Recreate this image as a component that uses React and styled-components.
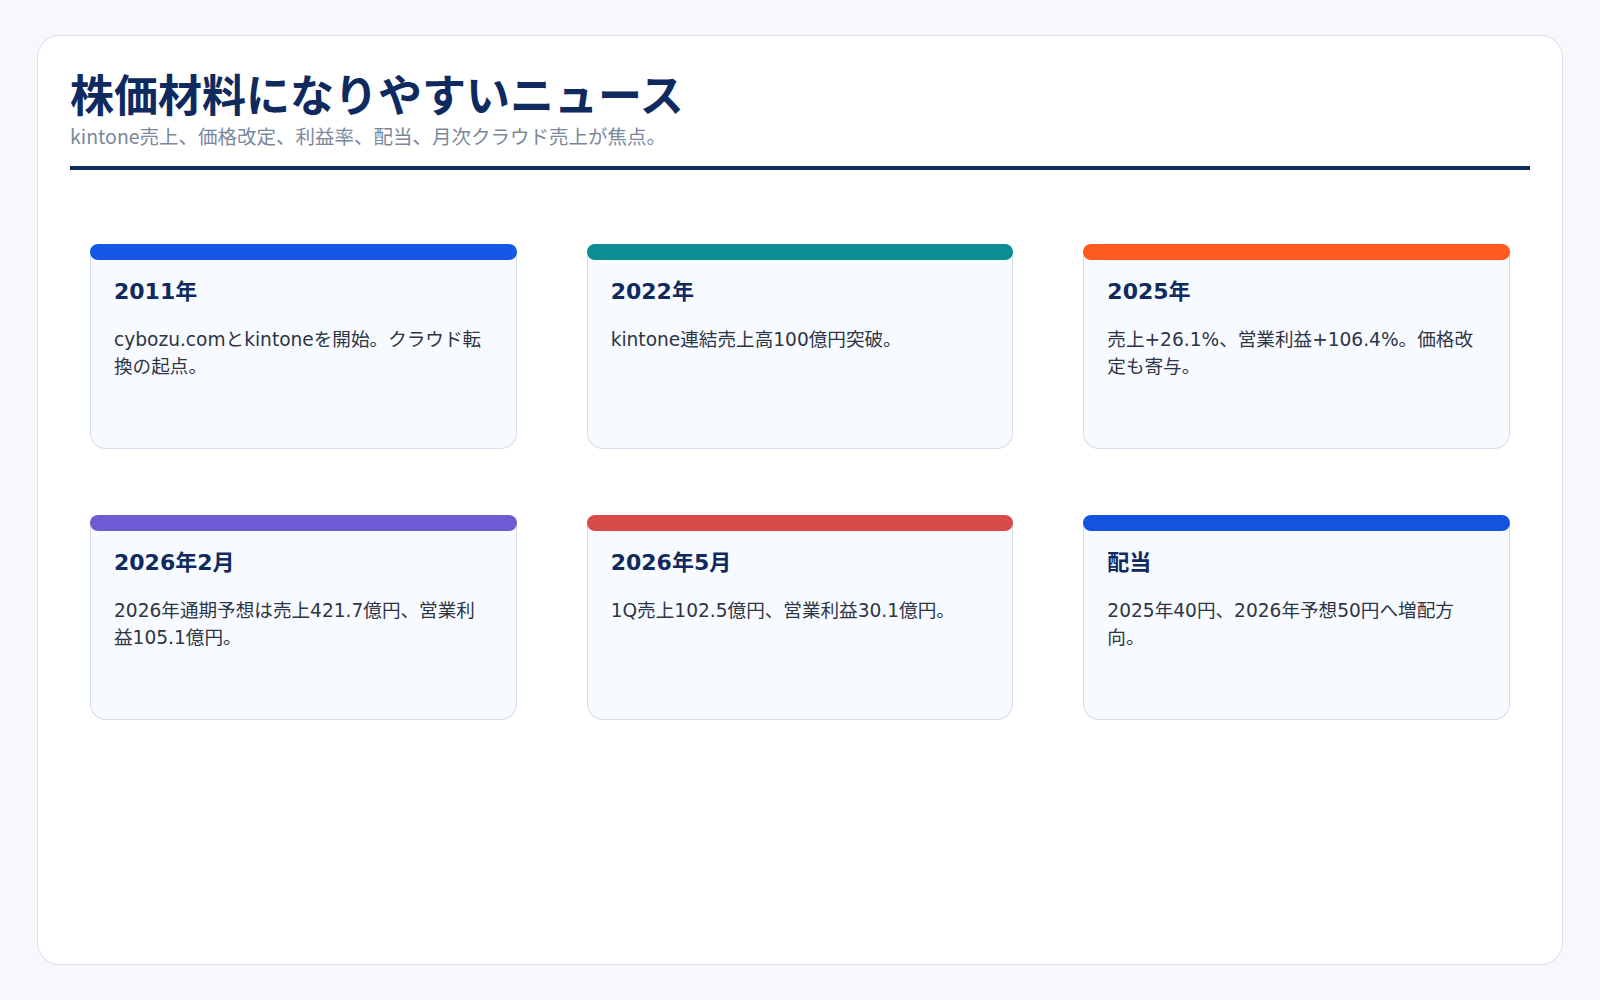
import React from 'react';
import styled, { createGlobalStyle } from 'styled-components';

const GlobalStyle = createGlobalStyle`
  html, body { margin: 0; padding: 0; background: #f6f8fc; }
  body { font-family: "DejaVu Sans", "Noto Sans CJK JP", sans-serif; }
`;

const items = [
  { title: '2011年', text: 'cybozu.comとkintoneを開始。クラウド転換の起点。', color: '#1557e6' },
  { title: '2022年', text: 'kintone連結売上高100億円突破。', color: '#0b8f93' },
  { title: '2025年', text: '売上+26.1%、営業利益+106.4%。価格改定も寄与。', color: '#ff5a1f' },
  { title: '2026年2月', text: '2026年通期予想は売上421.7億円、営業利益105.1億円。', color: '#6f5bd3' },
  { title: '2026年5月', text: '1Q売上102.5億円、営業利益30.1億円。', color: '#d94b4b' },
  { title: '配当', text: '2025年40円、2026年予想50円へ増配方向。', color: '#1452e0' },
];

const Page = styled.div`
  padding: 35px 37px;
  height: 1000px;
  box-sizing: border-box;
`;

const Panel = styled.div`
  height: 930px;
  box-sizing: border-box;
  background: #fff;
  border: 1.5px solid #d6dfec;
  border-radius: 22px;
  padding: 28px 32px;
`;

const Title = styled.h1`
  margin: 0;
  font-family: "Noto Sans CJK JP", sans-serif;
  font-weight: 700;
  font-size: 44px;
  line-height: 58px;
  color: #0f2a5e;
`;

const Subtitle = styled.p`
  margin: 0;
  font-family: "Noto Sans CJK JP", sans-serif;
  font-size: 19.5px;
  line-height: 28px;
  color: #7a889c;
`;

const Rule = styled.div`
  height: 4px;
  background: #0f2a5e;
  margin-top: 16px;
`;

const Grid = styled.div`
  display: grid;
  grid-template-columns: repeat(3, 1fr);
  column-gap: 70px;
  row-gap: 66px;
  padding: 74px 20px 0;
`;

const Item = styled.div`
  display: flex;
  flex-direction: column;
`;

const Bar = styled.div`
  height: 16px;
  background: ${p => p.$color};
  border-radius: 9px;
  position: relative;
  z-index: 1;
`;

const Card = styled.div`
  height: 197px;
  margin-top: -8px;
  box-sizing: border-box;
  background: #f7faff;
  border: 1.5px solid #d5deeb;
  border-top: none;
  border-radius: 0 0 16px 16px;
  padding: 8px 23px 0;
`;

const CardTitle = styled.div`
  margin-top: 18px;
  font-weight: 700;
  font-size: 22px;
  line-height: 28px;
  color: #0f2a5e;
`;

const CardText = styled.div`
  margin-top: 20px;
  font-size: 18.6px;
  line-height: 27px;
  color: #2e3545;
`;

export default function App() {
  return (
    <>
      <GlobalStyle />
      <Page>
        <Panel>
          <Title>株価材料になりやすいニュース</Title>
          <Subtitle>kintone売上、価格改定、利益率、配当、月次クラウド売上が焦点。</Subtitle>
          <Rule />
          <Grid>
            {items.map(it => (
              <Item key={it.title}>
                <Bar $color={it.color} />
                <Card>
                  <CardTitle>{it.title}</CardTitle>
                  <CardText>{it.text}</CardText>
                </Card>
              </Item>
            ))}
          </Grid>
        </Panel>
      </Page>
    </>
  );
}
